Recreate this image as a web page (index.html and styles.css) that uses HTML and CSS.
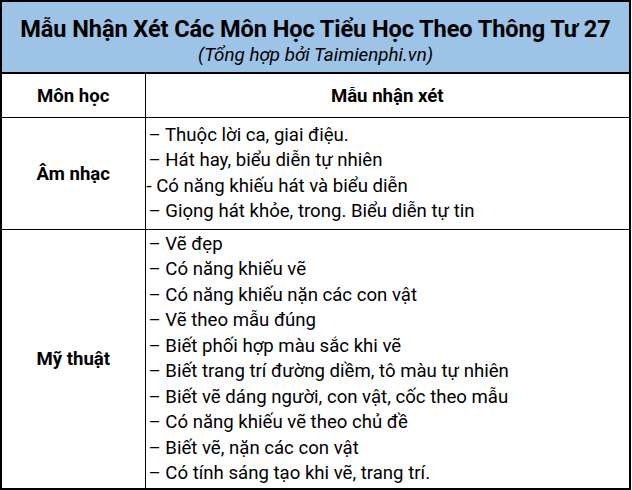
FILE: index.html
```html
<!DOCTYPE html>
<html lang="vi">
<head>
<meta charset="utf-8">
<link rel="stylesheet" href="styles.css">
</head>
<body>
<table class="sheet">
  <colgroup>
    <col class="col-subject">
    <col class="col-notes">
  </colgroup>
  <tr class="banner-row">
    <td class="banner" colspan="2">
      <div class="title">Mẫu Nhận Xét Các Môn Học Tiểu Học Theo Thông Tư 27</div>
      <div class="subtitle">(Tổng hợp bởi Taimienphi.vn)</div>
    </td>
  </tr>
  <tr class="head">
    <th>Môn học</th>
    <th>Mẫu nhận xét</th>
  </tr>
  <tr class="music">
    <td class="subject">Âm nhạc</td>
    <td class="notes">
      <div>– Thuộc lời ca, giai điệu.</div>
      <div>– Hát hay, biểu diễn tự nhiên</div>
      <div class="hyphen">- Có năng khiếu hát và biểu diễn</div>
      <div>– Giọng hát khỏe, trong. Biểu diễn tự tin</div>
    </td>
  </tr>
  <tr class="art">
    <td class="subject">Mỹ thuật</td>
    <td class="notes">
      <div>– Vẽ đẹp</div>
      <div>– Có năng khiếu vẽ</div>
      <div>– Có năng khiếu nặn các con vật</div>
      <div>– Vẽ theo mẫu đúng</div>
      <div>– Biết phối hợp màu sắc khi vẽ</div>
      <div>– Biết trang trí đường diềm, tô màu tự nhiên</div>
      <div>– Biết vẽ dáng người, con vật, cốc theo mẫu</div>
      <div>– Có năng khiếu vẽ theo chủ đề</div>
      <div>– Biết vẽ, nặn các con vật</div>
      <div>– Có tính sáng tạo khi vẽ, trang trí.</div>
    </td>
  </tr>
</table>
</body>
</html>
```
FILE: styles.css
```css
html, body {
  margin: 0;
  padding: 0;
  background: #fff;
}
body {
  font-family: Roboto, "Liberation Sans", sans-serif;
  color: #000;
}
.sheet {
  width: 631px;
  border-collapse: collapse;
  table-layout: fixed;
  border: 2px solid #000;
}
.col-subject {
  width: 144px;
}
.sheet td, .sheet th {
  border: 1px solid #000;
  padding: 0;
}
.banner-row td {
  height: 70px;
}
.banner {
  background: #9dc3e6;
  text-align: center;
  vertical-align: top;
  border-bottom: 2px solid #000 !important;
}
.title {
  font-weight: bold;
  font-size: 23.6px;
  line-height: 26px;
  margin-top: 14px;
  letter-spacing: -0.1px;
}
.subtitle {
  font-style: italic;
  font-size: 18.8px;
  line-height: 26px;
}
.head th {
  height: 43px;
  font-size: 18.6px;
  font-weight: bold;
  text-align: center;
  vertical-align: middle;
}
.subject {
  font-weight: bold;
  font-size: 18.6px;
  text-align: center;
  vertical-align: middle;
}
.notes {
  font-size: 18.6px;
  line-height: 25.5px;
  padding-left: 3px !important;
  vertical-align: middle;
  white-space: nowrap;
}
.notes .hyphen {
  margin-left: -2px;
}
.music td {
  height: 111px;
}
.art td {
  height: 258px;
}
```
